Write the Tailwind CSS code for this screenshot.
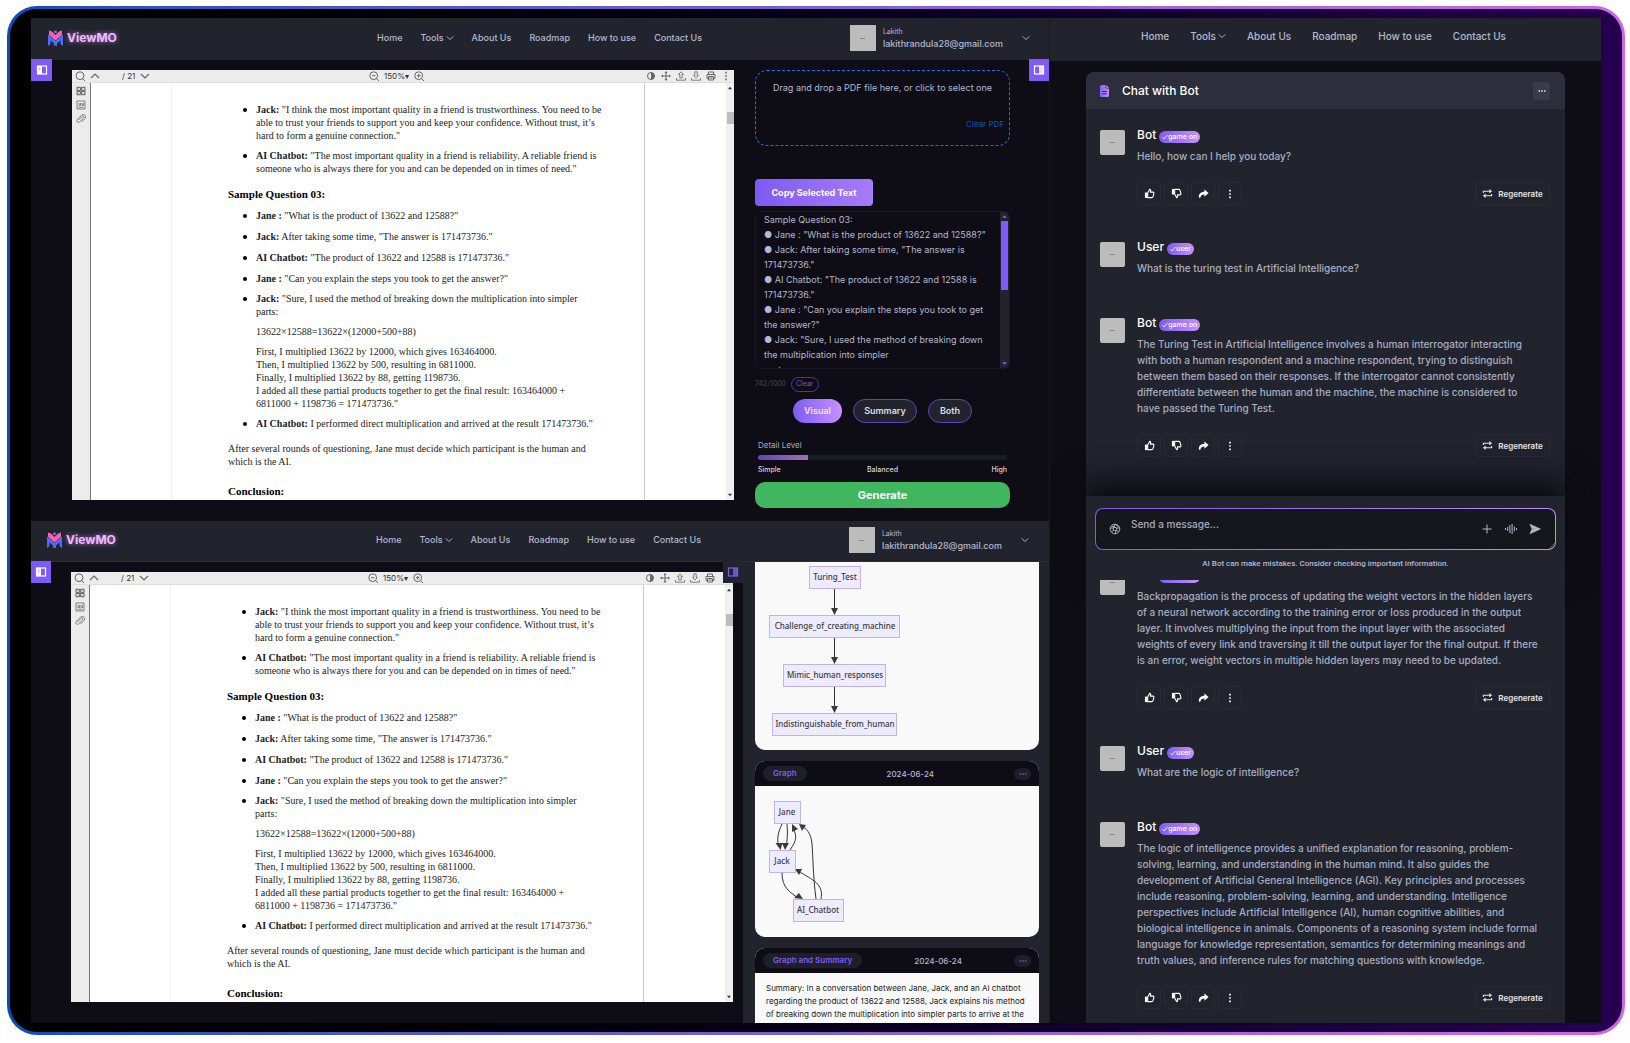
<!DOCTYPE html>
<html lang="en">
<head>
<meta charset="utf-8">
<title>ViewMO</title>
<script src="https://cdn.jsdelivr.net/npm/@tailwindcss/browser@4"></script>
</head>
<body class="bg-white font-['Inter',sans-serif] text-[#b4b9cf]">

<svg class="absolute size-0">
  <symbol id="chev" viewBox="0 0 10 10"><path d="M1 3l4 4 4-4" fill="none" stroke="currentColor" stroke-width="1.2"/></symbol>
  <symbol id="logo" viewBox="0 0 15 16"><circle cx="7.500" cy="1.800" r="1.500" fill="#4f7cff"/><path d="M1 0.500L4 1.500 7.500 5 11 1.500 14 0.500V5L7.500 10.500 1 5z" fill="#ff5fa8"/><path d="M0 4.500L7.500 11 15 4.500V16L12.500 14V10.500L9 13.500V16H8L7.500 15 7 16H6V13.500L2.500 10.500V14L0 16z" fill="#4a6cff"/></symbol>
  <symbol id="panel-l" viewBox="0 0 12 12"><rect x="1.500" y="2" width="9" height="8" fill="none" stroke="currentColor" stroke-width="1.200"/><rect x="1.500" y="2" width="4.500" height="8" fill="currentColor"/><path d="M3.200 4h1M3.200 6h1" stroke="#7e5bf5"/></symbol>
  <symbol id="panel-r" viewBox="0 0 12 12"><rect x="1.500" y="2" width="9" height="8" fill="none" stroke="currentColor" stroke-width="1.200"/><rect x="6" y="2" width="4.500" height="8" fill="currentColor" opacity=".8"/></symbol>
  <symbol id="search" viewBox="0 0 10 10"><circle cx="5" cy="4.700" r="3.900" fill="none" stroke="currentColor"/><path d="M7.500 7.500L10 10" stroke="currentColor"/></symbol>
  <symbol id="zout" viewBox="0 0 10 10"><circle cx="4.700" cy="4.700" r="3.900" fill="none" stroke="currentColor"/><path d="M7.500 7.500L10 10M3 4.700h3.500" stroke="currentColor"/></symbol>
  <symbol id="zin" viewBox="0 0 10 10"><circle cx="4.700" cy="4.700" r="3.900" fill="none" stroke="currentColor"/><path d="M7.500 7.500L10 10M3 4.700h3.500M4.700 3v3.500" stroke="currentColor"/></symbol>
  <symbol id="contrast" viewBox="0 0 10 10"><circle cx="5" cy="5" r="3.500" fill="none" stroke="currentColor"/><path d="M5 1.500a3.500 3.500 0 010 7z" fill="currentColor"/></symbol>
  <symbol id="move" viewBox="0 0 10 10"><path d="M5 1v8M1 5h8" stroke="currentColor"/><path d="M5 0l1.500 2h-3zM5 10l1.500-2h-3zM0 5l2-1.500v3zM10 5L8 3.500v3z" fill="currentColor"/></symbol>
  <symbol id="up" viewBox="0 0 10 10"><path d="M5 .8L7.500 3.500H6.200V7H3.800V3.500H2.500zM.5 7v2.200h9V7" fill="none" stroke="currentColor" stroke-width=".8"/></symbol>
  <symbol id="down" viewBox="0 0 10 10"><path d="M5 7L7.500 4.300H6.200V.8H3.800v3.500H2.500zM.5 7v2.200h9V7" fill="none" stroke="currentColor" stroke-width=".8"/></symbol>
  <symbol id="print" viewBox="0 0 10 10"><path d="M2.500 3V1h5v2M2.500 7.500H1V3.500h8v4H7.500M2.500 5.500h5V9h-5zM3.500 7h3" fill="none" stroke="currentColor"/></symbol>
  <symbol id="vdots" viewBox="0 0 10 10"><path d="M4.200 .8h1.600v1.600H4.200zM4.200 4.200h1.600v1.600H4.200zM4.200 7.600h1.600v1.600H4.200z" fill="currentColor"/></symbol>
  <symbol id="grid" viewBox="0 0 10 10"><path d="M1 1.500h3.500v3H1zM5.500 1.500H9v3H5.500zM1 5.500h3.500v3H1zM5.500 5.500H9v3H5.500z" fill="none" stroke="currentColor" stroke-width=".9"/></symbol>
  <symbol id="outline" viewBox="0 0 10 10"><path d="M1 1h8v8H1zM3 3v2.500h1.500V3M6 3v2.500h1.500V3M2.500 7.300h5" fill="none" stroke="currentColor" stroke-width=".8"/></symbol>
  <symbol id="clip" viewBox="0 0 10 10"><path d="M2.500 6L6 2.500a1 1 0 011.500 1.500L3.700 7.800a1.700 1.700 0 01-2.500-2.400L5.500 1.300A2.300 2.300 0 019 4.500L5.500 8" fill="none" stroke="currentColor" stroke-width=".8"/></symbol>
  <symbol id="thumb" viewBox="0 0 12 12"><path d="M1 5h2.500v6H1z" fill="currentColor"/><path d="M4 5.500L6.200 1.500c1.300 0 1.300 1.500.8 3h2.800c1 0 1.200 1 .9 2L9.800 9.500c-.2.700-.5 1-1.200 1H4z" fill="none" stroke="currentColor" stroke-width="1.200" stroke-linejoin="round"/></symbol>
  <symbol id="share" viewBox="0 0 12 12"><path d="M7 1.500L11.500 5.500 7 9.500V7C4.500 7 3 7.800 2.500 10.500H1C.5 6.500 3 4 7 4z" fill="currentColor"/></symbol>
  <symbol id="regen" viewBox="0 0 12 12"><path d="M1.500 5.500V3.500h7M10.500 6.500v2h-7" fill="none" stroke="currentColor" stroke-width="1.200"/><path d="M8 1l3 2.500L8 6zM4 6L1 8.500 4 11z" fill="currentColor"/></symbol>
  <symbol id="doc" viewBox="0 0 9 12"><path d="M0 1.500A1.500 1.500 0 011.500 0H5.500V3.500H9V10.500A1.500 1.500 0 017.500 12h-6A1.500 1.500 0 010 10.500z" fill="url(#docg)"/><path d="M6.200 0L9 2.800H6.200z" fill="#c893ff"/><path d="M2.200 6.500h4.600M2.200 8.800h4.600" stroke="#33284f"/></symbol>
  <symbol id="globe" viewBox="0 0 12 12"><g fill="none" stroke="currentColor" stroke-width=".9"><circle cx="6" cy="6" r="4.800"/><circle cx="6" cy="6" r="1.800"/><path d="M6 1.200L4.500 5M6 1.200L9.800 4M10.500 5L7.500 5M9.500 9L7.500 7M6 10.800L7.300 7.500M2.500 9L4.500 7.300M1.500 5l3 0M2.500 3l3.500 1.200"/></g></symbol>
  <symbol id="wave" viewBox="0 0 12 12"><path d="M.5 5v2M2.700 4v4M4.900 2v8M7.100 1v10M9.300 3.500v5M11.500 5v2" stroke="currentColor"/></symbol>
  <symbol id="send" viewBox="0 0 12 12"><path d="M1 1.200L11.500 6 1 10.800 2.700 6.600 7 6 2.700 5.400z" fill="currentColor" stroke="currentColor" stroke-width=".6"/></symbol>
  <linearGradient id="docg"><stop stop-color="#8560f8"/><stop offset="1" stop-color="#c08cff"/></linearGradient>
</svg>

<div class="h-screen min-h-[640px] pt-[6px] pr-[5px] pb-2 pl-[7px]">
<div class="h-full rounded-[30px] bg-linear-to-r from-[#0450b8] to-[#cf66e8] p-[3px]">
<div class="h-full overflow-hidden rounded-[27px] bg-linear-to-r from-black to-[#26004f] px-[21px] py-[9px]">
<main class="grid h-full grid-cols-[1018fr_552fr]">

  <div class="grid min-h-0 grid-rows-[503fr_502fr]">
    <section class="flex min-h-0 flex-col overflow-hidden bg-[#0e0c15]">
      <header data-header class="flex h-[42px] shrink-0 items-center bg-[#21242d] pr-[19px] pb-[2px] pl-[17px]"></header>
      <div class="relative flex min-h-0 flex-1 pl-[41px]">
        <button aria-label="Toggle documents" class="absolute -top-px left-0 flex h-[22px] w-[21px] items-center justify-center bg-[#7e5bf5] text-white"><svg class="size-3"><use href="#panel-l"/></svg></button>
        <button aria-label="Toggle history" class="absolute -top-px right-0 flex h-[22px] w-5 items-center justify-center bg-[#7e5bf5] text-white"><svg class="size-3"><use href="#panel-r"/></svg></button>
        <div data-pdf class="mt-[10px] mb-[21px] flex min-w-0 flex-1 flex-col overflow-hidden bg-white text-[#666]"></div>
        <div class="mt-[10px] mr-[39px] ml-[21px] flex w-[255px] shrink-0 flex-col">
          <div class="flex h-[76px] flex-col rounded-xl border border-dashed border-[#0a78f5] px-[5px] text-center">
            <p class="mt-[9px] text-[9px] leading-4">Drag and drop a PDF file here, or click to select one</p>
            <button class="mt-5 self-end text-[8px] leading-4 text-[#0757b8]">Clear PDF</button>
          </div>
          <button class="mt-[33px] h-[27px] w-[118px] rounded-[4px] bg-linear-to-r from-[#8059f5] to-[#a57bfa] text-[9px] font-bold text-white">Copy Selected Text</button>
          <div class="mt-[5px] flex h-[158px] overflow-hidden rounded-md border border-[#191822]">
            <textarea aria-label="Selected text" class="min-w-0 flex-1 resize-none overflow-hidden bg-transparent pl-2 text-[9px] leading-[15px] whitespace-pre outline-none">Sample Question 03:
● Jane : "What is the product of 13622 and 12588?"
● Jack: After taking some time, "The answer is
171473736."
● AI Chatbot: "The product of 13622 and 12588 is
171473736."
● Jane : "Can you explain the steps you took to get
the answer?"
● Jack: "Sure, I used the method of breaking down
the multiplication into simpler
parts:</textarea>
            <div class="flex w-[9px] flex-col items-center bg-[#21242d] text-[#7e5bf5]">
              <svg class="my-[2px] size-[5px] shrink-0" viewBox="0 0 6 6"><path d="M0 4.500L3 1.500 6 4.500z" fill="currentColor"/></svg>
              <div class="h-[69px] w-[7px] shrink-0 bg-[#7e5bf5]"></div>
              <svg class="mt-auto mb-[2px] size-[5px] shrink-0" viewBox="0 0 6 6"><path d="M0 1.500L3 4.500 6 1.500z" fill="currentColor"/></svg>
            </div>
          </div>
          <div class="mt-2 flex h-[15px] items-center gap-[5px] text-[7px]">
            <span class="text-[#4a4a55]">742/1000</span>
            <button class="h-[15px] rounded-full border border-[#4f3a9c] px-[4px] text-[#7553dc]">Clear</button>
          </div>
          <div class="mt-[7px] flex h-6 justify-center gap-[11px] text-[9px] font-semibold">
            <button class="w-[49px] rounded-full bg-linear-to-r from-[#8059f5] to-[#c890ff] text-[#ece6ff]">Visual</button>
            <button class="w-16 rounded-full border border-[#5f44b8] bg-[#21242d] text-[#dcdde8]">Summary</button>
            <button class="w-11 rounded-full border border-[#5f44b8] bg-[#21242d] text-[#dcdde8]">Both</button>
          </div>
          <div class="mt-4 px-[3px]">
            <label for="detail" class="block text-[8px] leading-3 text-[#a6abbf]">Detail Level</label>
            <input id="detail" type="range" min="0" max="100" value="20" class="mt-1 block h-[5px] w-full appearance-none rounded-full bg-linear-to-r from-[#6545b5] from-0% via-[#9a6fb8] via-20% to-[#181b22] to-20% [&::-webkit-slider-thumb]:appearance-none [&::-webkit-slider-thumb]:opacity-0">
            <div class="mt-1 grid grid-cols-3 text-[7px] leading-3 font-medium text-[#d5d6df]"><span>Simple</span><span class="text-center">Balanced</span><span class="text-right">High</span></div>
          </div>
          <button class="mt-[6px] h-[26px] shrink-0 rounded-[10px] bg-[#40b75f] text-[11px] font-bold text-white">Generate</button>
        </div>
      </div>
    </section>

    <section class="flex min-h-0 flex-col overflow-hidden bg-[#0e0c15]">
      <header data-header class="flex h-[41px] shrink-0 items-center border-b border-[#2b2e38] bg-[#21242d] pr-5 pb-[2px] pl-4"></header>
      <div class="relative flex min-h-0 flex-1 pl-10">
        <button aria-label="Toggle documents" class="absolute -top-px left-0 flex h-[22px] w-5 items-center justify-center bg-[#7e5bf5] text-white"><svg class="size-3"><use href="#panel-l"/></svg></button>
        <div data-pdf class="mt-[10px] mb-[21px] flex min-w-0 flex-1 flex-col overflow-hidden bg-white text-[#666]"></div>
        <button aria-label="Toggle history" class="absolute -top-px right-[306px] flex h-[22px] w-5 items-center justify-center bg-[#21242d] text-[#7e5bf5]"><svg class="size-3"><use href="#panel-r"/></svg></button>
        <div class="ml-[10px] flex w-[306px] shrink-0 flex-col gap-[11px] overflow-hidden bg-[#21242d] pr-[10px] pl-3">
          <article class="h-[188px] shrink-0 rounded-b-[10px] bg-[#f9f9f9]">
            <svg class="block" width="284" height="188" font-family="Noto Sans" font-size="8" font-weight="500" fill="#3a3a3a" text-anchor="middle">
              <g fill="#ecebff" stroke="#c3b0ec"><rect x="54.500" y="4.500" width="51" height="22"/><rect x="14.500" y="53.500" width="130" height="22"/><rect x="28.500" y="102.500" width="102" height="22"/><rect x="17.500" y="151.500" width="124" height="22"/></g>
              <path d="M79.500 27v20M79.500 76v20M79.500 125v20" stroke="#333"/><path d="M76 46h7l-3.500 7zM76 95h7l-3.500 7zM76 144h7l-3.500 7z"/>
              <text x="80" y="18">Turing_Test</text><text x="80" y="67">Challenge_of_creating_machine</text><text x="80" y="116">Mimic_human_responses</text><text x="80" y="165">Indistinguishable_from_human</text>
            </svg>
          </article>
          <article class="shrink-0 overflow-hidden rounded-[10px] bg-[#f9f9f9]">
            <div class="flex h-[25px] items-center justify-between bg-[#0e0c15] px-2 text-[8px]">
              <h3 class="rounded-full bg-[#1e1f29] px-[10px] leading-[15px] font-semibold text-[#7e5bf5]">Graph</h3><time class="font-medium">2024-06-24</time>
              <button aria-label="More" class="flex h-3 w-[17px] items-center justify-center rounded-full bg-[#1e1f29] text-[#7e5bf5]"><svg class="size-2 rotate-90"><use href="#vdots"/></svg></button>
            </div>
            <svg class="block" width="284" height="151" font-family="Noto Sans" font-size="8" font-weight="500" fill="#3a3a3a" text-anchor="middle">
              <g fill="none" stroke="#333"><path d="M27 38C22 48 22 55 24 61M32 38C33 48 32 55 31 61M35 64C42 54 42 50 38 42M27 87C27 102 35 106 43 112M61 113C58 90 58 70 57 58S51 43 47 40M66 113C69 98 58 94 43 85"/></g>
              <path d="M20.500 57h7l-2 7zM27 57h7l-4 7zM37 38l6 5-6 3zM39 112l5-5 4 6zM44 38l7 1-4 6zM40 83l7 0-3 6z"/>
              <g fill="#ecebff" stroke="#c3b0ec"><rect x="19.500" y="15.500" width="26" height="22"/><rect x="14.500" y="64.500" width="26" height="22"/><rect x="38.500" y="113.500" width="50" height="22"/></g>
              <text x="32" y="29">Jane</text><text x="27" y="78">Jack</text><text x="63" y="127">AI_Chatbot</text>
            </svg>
          </article>
          <article class="h-[120px] shrink-0 overflow-hidden rounded-[10px] bg-[#f9f9f9]">
            <div class="flex h-[25px] items-center justify-between bg-[#0e0c15] px-2 text-[8px]">
              <h3 class="rounded-full bg-[#1e1f29] px-[10px] leading-[15px] font-semibold text-[#7e5bf5]">Graph and Summary</h3><time class="font-medium">2024-06-24</time>
              <button aria-label="More" class="flex h-3 w-[17px] items-center justify-center rounded-full bg-[#1e1f29] text-[#7e5bf5]"><svg class="size-2 rotate-90"><use href="#vdots"/></svg></button>
            </div>
            <p class="px-[11px] pt-[9px] text-[8px] leading-[13px] whitespace-nowrap text-[#1a1a1a]">Summary: In a conversation between Jane, Jack, and an AI chatbot<br>regarding the product of 13622 and 12588, Jack explains his method<br>of breaking down the multiplication into simpler parts to arrive at the</p>
          </article>
        </div>
      </div>
    </section>
  </div>

  <section class="flex min-h-0 flex-col overflow-hidden border-l border-[#1b1529] bg-[#0e0c15]">
    <header class="h-[43px] shrink-0 bg-[#21242d] pt-[10px] pl-[91px]"><nav data-nav class="flex gap-[21px] text-[10px] leading-4 font-medium whitespace-nowrap"></nav></header>
    <div class="mt-[11px] mr-9 ml-9 flex min-h-0 flex-1 flex-col rounded-t-lg bg-[#21242d]">
      <div class="flex h-[37px] shrink-0 items-center rounded-t-lg bg-[#2d2e3b] pr-[15px] pl-[14px]">
        <svg class="h-3 w-[9px]"><use href="#doc"/></svg>
        <h2 class="ml-[13px] text-[12px] font-medium text-white">Chat with Bot</h2>
        <button aria-label="Chat options" class="ml-auto flex h-[18px] w-[17px] items-center justify-center rounded-[3px] bg-[#3a3b48] text-white"><svg class="size-2 rotate-90"><use href="#vdots"/></svg></button>
      </div>
      <div id="recent" class="h-[387px] shrink-0 overflow-hidden pt-[18px] pr-[15px] pl-[14px]"></div>
      <div class="relative h-[84px] shrink-0 px-[9px] pt-3 shadow-[0_-12px_30px_2px_#0b0a12]">
        <div class="absolute inset-0 bg-[#21242d]"></div>
        <form class="relative rounded-lg bg-linear-to-r from-[#8059f5] to-[#c08cff] p-px">
          <div class="relative flex h-10 items-center rounded-[7px] bg-[#16171d] pr-[14px] pl-[13px]">
            <svg class="size-3 shrink-0"><use href="#globe"/></svg>
            <textarea aria-label="Message" rows="1" placeholder="Send a message..." class="mb-[10px] ml-[10px] h-4 flex-1 resize-none overflow-hidden bg-transparent text-[10px] leading-4 font-medium outline-none placeholder:text-[#a6abbf]"></textarea>
            <button type="button" aria-label="Attach"><svg class="size-[10px]" viewBox="0 0 10 10"><path d="M5 .5v9M.5 5h9" stroke="currentColor"/></svg></button>
            <button type="button" aria-label="Voice" class="ml-[13px]"><svg class="size-3"><use href="#wave"/></svg></button>
            <button aria-label="Send" class="ml-3"><svg class="size-3"><use href="#send"/></svg></button>
            <svg class="absolute right-0 bottom-0 size-[6px]" viewBox="0 0 6 6"><path d="M0 6L6 0M3 6L6 3" stroke="#888" stroke-width=".7"/></svg>
          </div>
        </form>
        <p class="relative mt-2 text-center font-['Roboto',sans-serif] text-[8px] leading-3 font-medium">AI Bot can make mistakes. Consider checking important information.</p>
      </div>
      <div class="relative min-h-0 flex-1 overflow-hidden bg-[#21242d] pr-[15px] pl-[14px]"><div id="history" class="-mt-[13px]"></div></div>
    </div>
  </section>
</main>
</div>
</div>
</div>

<script>
const icon = (id, cls) => `<svg class="${cls}"><use href="#${id}"/></svg>`;
const navLinks = `<a href="#">Home</a><a href="#" class="flex items-center gap-[2px]">Tools${icon('chev', 'size-2')}</a><a href="#">About Us</a><a href="#">Roadmap</a><a href="#">How to use</a><a href="#">Contact Us</a>`;
const avatar = (cls) => `<div class="${cls}"><i class="block h-px w-[5px] bg-[#888]"></i></div>`;

document.querySelectorAll('[data-header]').forEach(h => h.innerHTML = `
  <a href="#" class="flex w-[329px] items-center gap-1 text-[12px] font-bold text-[#eebcff] text-shadow-[0_0_5px_#c77be0]">${icon('logo', 'h-4 w-[15px]')}ViewMO</a>
  <nav class="flex gap-[18px] text-[9px] leading-4 font-medium whitespace-nowrap">${navLinks}</nav>
  <div class="ml-auto flex items-center gap-[7px]">
    ${avatar('flex size-[26px] items-center justify-center bg-[#bcbcbc]')}
    <div><p class="text-[7px] leading-3">Lakith</p><p class="text-[9px] leading-3 font-medium">lakithrandula28@gmail.com</p></div>
    <button aria-label="Account menu" class="ml-3">${icon('chev', 'size-2')}</button>
  </div>`);
document.querySelectorAll('[data-nav]').forEach(n => n.innerHTML = navLinks);

const doc = `
  <ul class="list-none [&>li]:relative [&>li]:before:absolute [&>li]:before:top-[5px] [&>li]:before:-left-[13px] [&>li]:before:size-1 [&>li]:before:rounded-full [&>li]:before:bg-black pl-7">
    <li><b>Jack:</b> "I think the most important quality in a friend is trustworthiness. You need to be<br>able to trust your friends to support you and keep your confidence. Without trust, it’s<br>hard to form a genuine connection."</li>
    <li class="mt-[7px]"><b>AI Chatbot:</b> "The most important quality in a friend is reliability. A reliable friend is<br>someone who is always there for you and can be depended on in times of need."</li>
  </ul>
  <h3 class="mt-[13px] text-[11px] font-bold text-black">Sample Question 03:</h3>
  <ul class="list-none mt-2 [&>li]:relative [&>li]:before:absolute [&>li]:before:top-[5px] [&>li]:before:-left-[13px] [&>li]:before:size-1 [&>li]:before:rounded-full [&>li]:before:bg-black pl-7">
    <li><b>Jane :</b> "What is the product of 13622 and 12588?"</li>
    <li class="mt-2"><b>Jack:</b> After taking some time, "The answer is 171473736."</li>
    <li class="mt-2"><b>AI Chatbot:</b> "The product of 13622 and 12588 is 171473736."</li>
    <li class="mt-2"><b>Jane :</b> "Can you explain the steps you took to get the answer?"</li>
    <li class="mt-[7px]"><b>Jack:</b> "Sure, I used the method of breaking down the multiplication into simpler<br>parts:
      <p class="mt-[7px]">13622×12588=13622×(12000+500+88)</p>
      <p class="mt-[7px]">First, I multiplied 13622 by 12000, which gives 163464000.<br>Then, I multiplied 13622 by 500, resulting in 6811000.<br>Finally, I multiplied 13622 by 88, getting 1198736.<br>I added all these partial products together to get the final result: 163464000 +<br>6811000 + 1198736 = 171473736."</p></li>
    <li class="mt-[7px]"><b>AI Chatbot:</b> I performed direct multiplication and arrived at the result 171473736."</li>
  </ul>
  <p class="mt-3">After several rounds of questioning, Jane must decide which participant is the human and<br>which is the AI.</p>
  <h3 class="mt-[17px] text-[11px] font-bold text-black">Conclusion:</h3>`;
const tool = (id, label) => `<button aria-label="${label}">${icon(id, 'size-[10px]')}</button>`;
document.querySelectorAll('[data-pdf]').forEach(p => p.innerHTML = `
  <div class="flex h-[13px] shrink-0 items-center border-b border-[#ddd] bg-[#ececec] pl-[3px] text-[8px]">
    <div class="flex w-[294px] items-center gap-[5px]">${tool('search', 'Find')}<button aria-label="Previous page" class="rotate-180">${icon('chev', 'size-[10px]')}</button><span class="ml-[17px] text-[#333]">/ 21</span><button aria-label="Next page">${icon('chev', 'size-[10px]')}</button></div>
    <div class="flex items-center gap-[5px]">${tool('zout', 'Zoom out')}<span class="text-[#333]">150%▾</span>${tool('zin', 'Zoom in')}</div>
    <div class="ml-auto flex gap-[5px] pr-[3px]">${tool('contrast', 'Theme')}${tool('move', 'Pan')}${tool('up', 'Open')}${tool('down', 'Download')}${tool('print', 'Print')}${tool('vdots', 'More')}</div>
  </div>
  <div class="flex min-h-0 flex-1 overflow-hidden">
    <div class="flex w-[19px] shrink-0 flex-col items-center gap-1 border-r border-[#777] bg-[#ececec] pt-[3px] text-[#666]"><button aria-label="Thumbnails" class="bg-[#d2d2d2]">${icon('grid', 'size-[10px]')}</button>${tool('outline', 'Outline')}${tool('clip', 'Attachments')}</div>
    <div class="ml-20 w-[474px] shrink-0 border-x border-x-[#f0f0f0] border-r-[#ccc] pt-5 pl-[56px] font-['Liberation_Serif',serif] text-[10px] leading-[13px] whitespace-nowrap text-[#222]">${doc}</div>
    <div class="ml-auto flex w-2 shrink-0 flex-col items-center bg-[#f0f0f0] text-[#333]"><svg class="my-[3px] size-1" viewBox="0 0 6 6"><path d="M0 5l3-4 3 4z" fill="currentColor"/></svg><div class="mt-[19px] h-3 w-[7px] bg-[#bdbdbd]"></div><svg class="mt-auto mb-[3px] size-1" viewBox="0 0 6 6"><path d="M0 1l3 4 3-4z" fill="currentColor"/></svg></div>
  </div>`);

const act = (id, label, cls) => `<button aria-label="${label}" class="flex h-[23px] w-6 items-center justify-center rounded-[5px] border border-[#292c36]">${icon(id, cls)}</button>`;
const message = (who, text, gap, labels = 'visible') => `
  <article class="${gap} flex gap-3">
    ${avatar('mt-[3px] flex size-[25px] shrink-0 items-center justify-center rounded-[2px] bg-[#bcbcbc]')}
    <div class="min-w-0 flex-1">
      <div class="flex h-4 items-center gap-[3px] text-[12px] leading-4 font-medium text-white"><span class="${labels}">${who}</span><span class="mt-[3px] flex h-3 items-center rounded-full bg-linear-to-r from-[#7e5bf5] to-[#c890ff] px-[3px] text-[7px] leading-3"><svg class="h-[6px] w-[6px]" viewBox="0 0 6 6"><path d="M.5 3l1.500 2L5.500 1" fill="none" stroke="currentColor" stroke-width=".8"/></svg><span class="${labels}">${who === 'Bot' ? 'game on' : 'user'}</span></span></div>
      <p class="mt-[5px] text-[10px] leading-4 font-medium whitespace-nowrap text-[#a8adc2]">${text}</p>
      ${who === 'Bot' ? `<div class="mt-[18px] flex gap-[3px] text-white">${act('thumb', 'Like', 'size-[11px]')}${act('thumb', 'Dislike', 'size-[11px] -scale-y-100')}${act('share', 'Share', 'size-[11px]')}${act('vdots', 'More', 'size-[10px]')}<button class="ml-auto flex h-[23px] w-[75px] items-center justify-center gap-[5px] rounded-[5px] border border-[#292c36] text-[8px] font-semibold text-[#e4e5ec]">${icon('regen', 'size-[11px]')}Regenerate</button></div>` : ''}
    </div>
  </article>`;
document.getElementById('recent').innerHTML =
  message('Bot', 'Hello, how can I help you today?', '') +
  message('User', 'What is the turing test in Artificial Intelligence?', 'mt-[34px]') +
  message('Bot', 'The Turing Test in Artificial Intelligence involves a human interrogator interacting<br>with both a human respondent and a machine respondent, trying to distinguish<br>between them based on their responses. If the interrogator cannot consistently<br>differentiate between the human and the machine, the machine is considered to<br>have passed the Turing Test.', 'mt-[39px]');
document.getElementById('history').innerHTML =
  message('Bot', 'Backpropagation is the process of updating the weight vectors in the hidden layers<br>of a neural network according to the training error or loss produced in the output<br>layer. It involves multiplying the input from the input layer with the associated<br>weights of every link and traversing it till the output layer for the final output. If there<br>is an error, weight vectors in multiple hidden layers may need to be updated.', '', 'invisible') +
  message('User', 'What are the logic of intelligence?', 'mt-[34px]') +
  message('Bot', 'The logic of intelligence provides a unified explanation for reasoning, problem-<br>solving, learning, and understanding in the human mind. It also guides the<br>development of Artificial General Intelligence (AGI). Key principles and processes<br>include reasoning, problem-solving, learning, and understanding. Intelligence<br>perspectives include Artificial Intelligence (AI), human cognitive abilities, and<br>biological intelligence in animals. Components of a reasoning system include formal<br>language for knowledge representation, semantics for determining meanings and<br>truth values, and inference rules for matching questions with knowledge.', 'mt-[39px]');
</script>
</body>
</html>
